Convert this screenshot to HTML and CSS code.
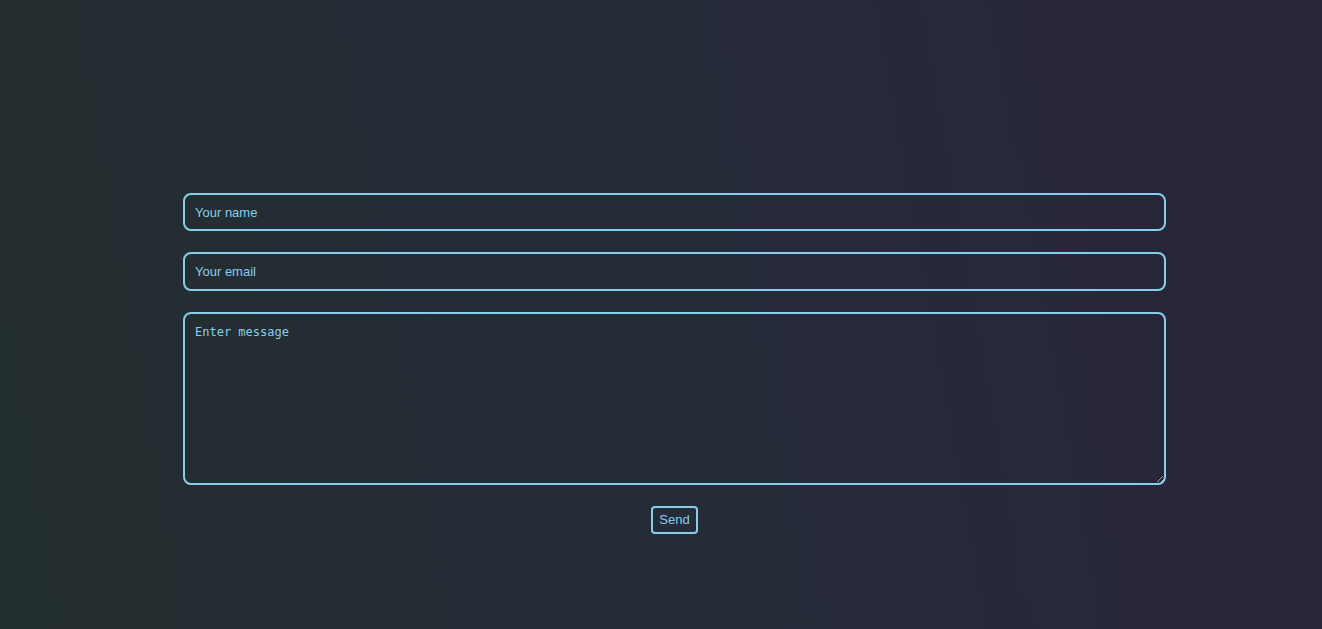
FILE: index.html
```html
<!DOCTYPE html>
<html lang="en">
<head>
<meta charset="utf-8">
<title>Contact</title>
<link rel="stylesheet" href="styles.css">
</head>
<body>
<main class="page">
  <form class="contact-form">
    <input class="field" type="text" placeholder="Your name">
    <input class="field" type="email" placeholder="Your email">
    <textarea class="field message" placeholder="Enter message"></textarea>
    <div class="actions">
      <button class="send" type="button">Send</button>
    </div>
  </form>
</main>
</body>
</html>
```
FILE: styles.css
```css
html, body {
  margin: 0;
  height: 100%;
}
body {
  background: linear-gradient(80deg, #232e2e 0%, #252c38 45%, #29253a 100%);
  font-family: "Liberation Sans", Arial, sans-serif;
}
.page {
  box-sizing: border-box;
  height: 100vh;
  padding: 193px 156px 0 183px;
}
.contact-form {
  display: flex;
  flex-direction: column;
  gap: 21px;
}
.field {
  box-sizing: border-box;
  width: 100%;
  height: 38.4px;
  margin: 0;
  padding: 0 10px;
  background: transparent;
  border: 2px solid #87ceeb;
  border-radius: 8px;
  color: #87ceeb;
  font-family: "Liberation Sans", Arial, sans-serif;
  font-size: 13px;
  outline: none;
}
.field::placeholder {
  color: #87ceeb;
  opacity: 1;
}
.message {
  height: 173px;
  padding: 11px 10px;
  font-family: "DejaVu Sans Mono", monospace;
  font-size: 12px;
  resize: vertical;
}
.actions {
  display: flex;
  justify-content: center;
}
.send {
  box-sizing: border-box;
  height: 28px;
  padding: 0 6px;
  background: transparent;
  border: 2px solid #87ceeb;
  border-radius: 4px;
  color: #87ceeb;
  font-family: "Liberation Sans", Arial, sans-serif;
  font-size: 13px;
  cursor: pointer;
}
```
